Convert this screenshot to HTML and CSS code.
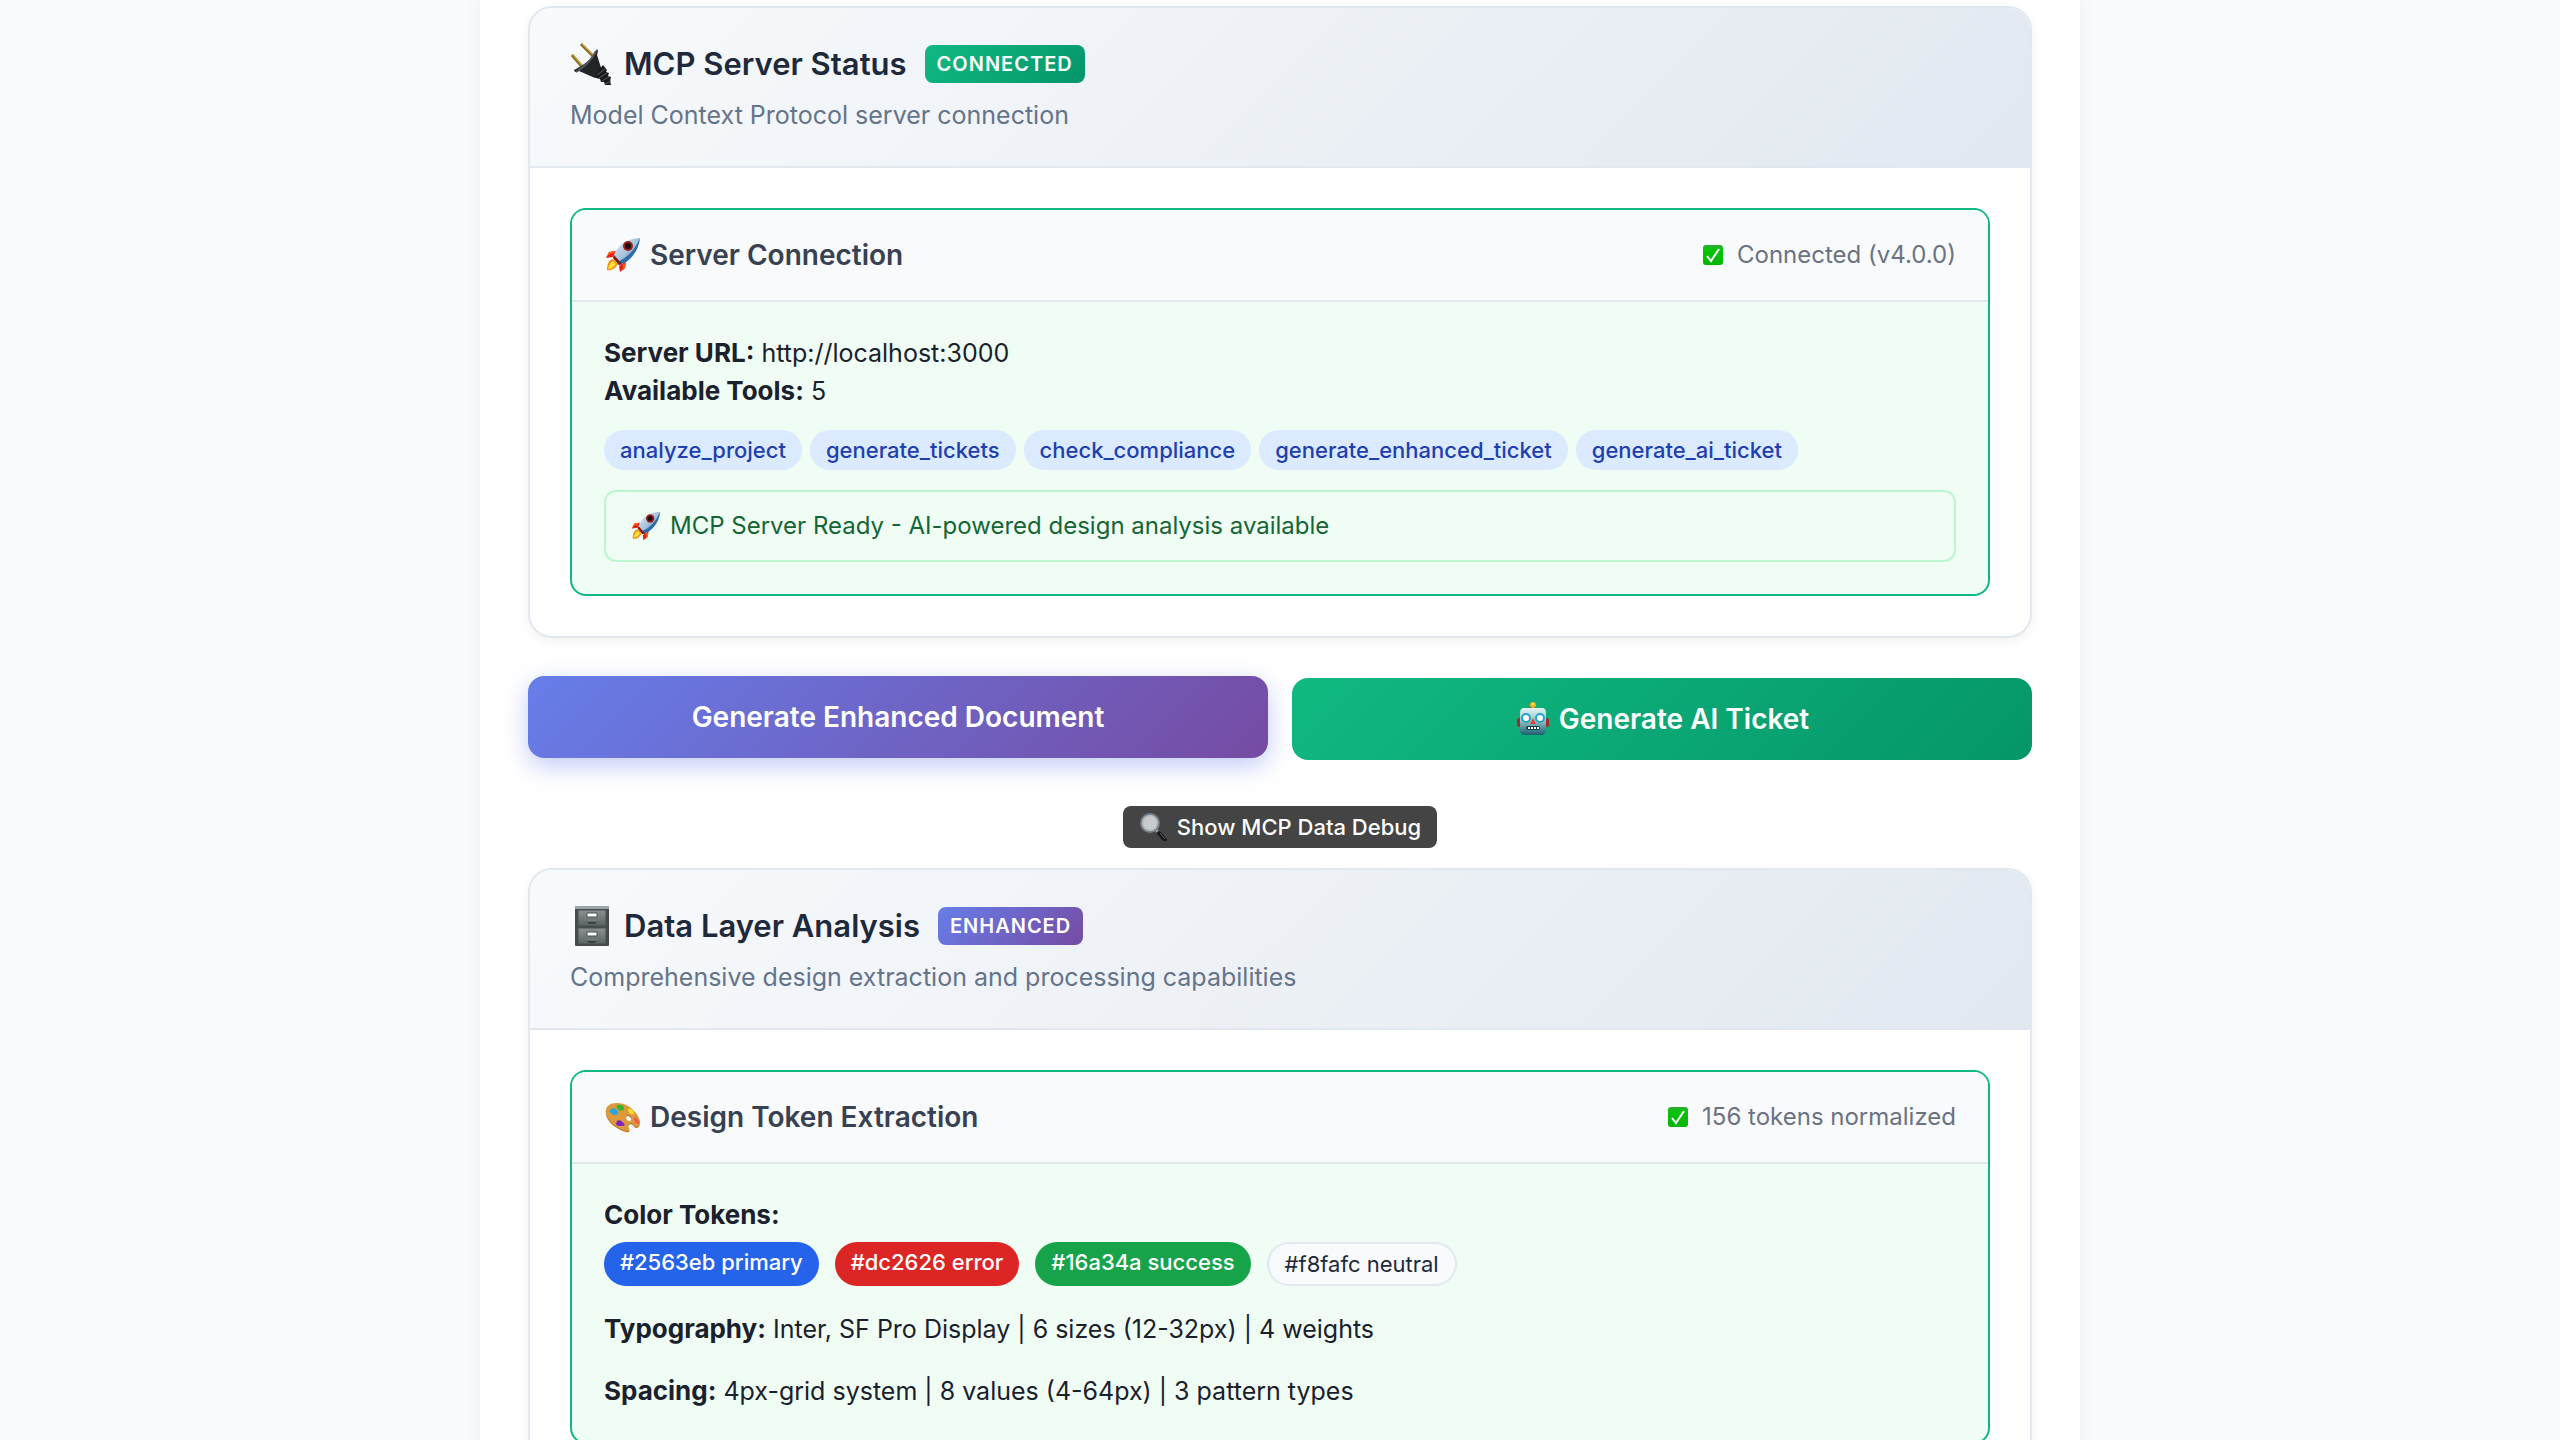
FILE: index.html
```html
<!DOCTYPE html>
<html lang="en">
<head>
<meta charset="utf-8">
<title>MCP Server Status</title>
<link rel="stylesheet" href="styles.css">
</head>
<body>
<svg class="defs" aria-hidden="true">
  <defs>
    <linearGradient id="rocketBody" x1="0" y1="0" x2="1" y2="1">
      <stop offset="0" stop-color="#e6eef5"/><stop offset=".5" stop-color="#a9c3dc"/><stop offset="1" stop-color="#2e6fae"/>
    </linearGradient>
    <linearGradient id="checkFill" x1="0" y1="0" x2="0" y2="1">
      <stop offset="0" stop-color="#2fa83c"/><stop offset=".2" stop-color="#0cc40c"/><stop offset="1" stop-color="#00b400"/>
    </linearGradient>
    <linearGradient id="robotFace" x1="0" y1="0" x2="0" y2="1">
      <stop offset="0" stop-color="#e4f4f4"/><stop offset=".45" stop-color="#9cc5cb"/><stop offset="1" stop-color="#17606e"/>
    </linearGradient>
    <linearGradient id="steel" x1="0" y1="0" x2="0" y2="1">
      <stop offset="0" stop-color="#8a9293"/><stop offset="1" stop-color="#5b6263"/>
    </linearGradient>
    <symbol id="rocket" viewBox="0 0 36 36">
      <path d="M11 14 4 15 1 21l7-1zM21 24l-1 7-5 4-1-6z" fill="#e8220c"/>
      <path d="M9 14l-5 1-1 3 6-2zM21 26l-1 5-2 2 0-6z" fill="#ff5a1e"/>
      <path d="M8 22c-4 1-6 5-6 11 4 1 8-1 11-6z" fill="#f58a0b"/>
      <path d="M8 24c-3 2-4 4-5 8 3 0 6-2 8-5z" fill="#ffe13d"/>
      <path d="M35 1C25 1 16 6 11 14L8 21l6 7 7-3c8-6 13-14 14-24z" fill="url(#rocketBody)"/>
      <path d="M35 1c-1 10-6 18-14 24l-7 3-2-3C22 21 30 13 35 1z" fill="#2d6ca8"/>
      <path d="M8 21l6 7 3-1-8-9z" fill="#7f1b12"/>
      <circle cx="23" cy="9" r="5" fill="#9b2018"/><circle cx="23" cy="9" r="3" fill="#1a1114"/>
    </symbol>
    <symbol id="check" viewBox="0 0 20 20">
      <rect width="20" height="20" rx="3" fill="url(#checkFill)"/>
      <path d="M4 11l4 5 8-12" fill="none" stroke="#fff" stroke-width="2"/>
    </symbol>
  </defs>
</svg>

<main class="page">
  <section class="card">
    <header class="card-header">
      <h2 class="card-title">
        <svg class="icon-title" viewBox="0 0 44 44" aria-hidden="true">
          <path d="M2 13l12 14M11 2l13 13" stroke="#8a6a1c" stroke-width="3"/>
          <path d="M2 12l12 14M11 1l13 13" stroke="#d9ad3d" stroke-width="1"/>
          <path d="M27 7l1 2-1 4 6 19-8 4-16-7-4 1-1-2C13 24 23 16 27 7z" fill="#232425"/>
          <path d="M26 9C22 18 14 25 6 30" fill="none" stroke="#55585a" stroke-width="2"/>
          <path d="M33 23l4 5-1 2 3 1-1 3 3 1-1 4 1 4h-6l-1-3-3 0-1-3-4-1-1-3z" fill="#191a1b"/>
          <path d="M27 33l8-6M29 36l8-5M32 39l7-4M35 42l6-3" stroke="#5a5d60" stroke-width="1"/>
        </svg>
        <span>MCP Server Status</span>
        <span class="badge badge-green">CONNECTED</span>
      </h2>
      <p class="card-subtitle">Model Context Protocol server connection</p>
    </header>
    <div class="card-body">
      <article class="component">
        <header class="component-header">
          <h3 class="component-title"><svg class="icon-component" aria-hidden="true"><use href="#rocket"/></svg>Server Connection</h3>
          <span class="status"><svg class="icon-check" aria-hidden="true"><use href="#check"/></svg>Connected (v4.0.0)</span>
        </header>
        <div class="component-body">
          <p class="line"><strong>Server URL:</strong> http://localhost:3000</p>
          <p class="line"><strong>Available Tools:</strong> 5</p>
          <ul class="tools">
            <li class="pill">analyze_project</li>
            <li class="pill">generate_tickets</li>
            <li class="pill">check_compliance</li>
            <li class="pill">generate_enhanced_ticket</li>
            <li class="pill">generate_ai_ticket</li>
          </ul>
          <p class="notice"><svg class="icon-notice" aria-hidden="true"><use href="#rocket"/></svg>MCP Server Ready - AI-powered design analysis available</p>
        </div>
      </article>
    </div>
  </section>

  <div class="actions">
    <button type="button" class="action action-document">Generate Enhanced Document</button>
    <button type="button" class="action action-ticket">
      <svg class="icon-action" viewBox="0 0 36 36" aria-hidden="true">
        <rect x="2" y="17" width="4" height="9" rx="2" fill="#9c2f2c"/><rect x="30" y="17" width="4" height="9" rx="2" fill="#9c2f2c"/>
        <path d="M14 8c0-3 8-3 8 0z" fill="#7a4569"/><circle cx="18" cy="4" r="3" fill="#f4b51c"/><circle cx="18" cy="3" r="1" fill="#fff0a0"/>
        <path d="M9 7h18q4 0 4 5v17q0 5-5 5H10q-5 0-5-5V12q0-5 4-5z" fill="url(#robotFace)"/>
        <circle cx="11" cy="17" r="4" fill="#fff" stroke="#20a5c8" stroke-width="2"/><circle cx="25" cy="17" r="4" fill="#fff" stroke="#20a5c8" stroke-width="2"/>
        <path d="M18 17l3 6h-6z" fill="#e2452f"/>
        <rect x="11" y="25" width="14" height="4" rx="2" fill="#143c46"/>
        <path d="M13 27h11" stroke="#fff" stroke-width="2" stroke-dasharray="2 1"/>
      </svg>
      Generate AI Ticket
    </button>
  </div>

  <button type="button" class="debug">
    <svg class="icon-debug" viewBox="0 0 28 28" aria-hidden="true">
      <path d="M17 17l3 3" stroke="#9aa0a4" stroke-width="3"/>
      <path d="M20 20l6 7" stroke="#15171a" stroke-width="4" stroke-linecap="round"/>
      <path d="M21 20l5 6" stroke="#5b6066" stroke-width="1"/>
      <circle cx="11" cy="10" r="9" fill="#c9cbcc" stroke="#75818b" stroke-width="2"/>
      <circle cx="11" cy="10" r="7" fill="none" stroke="#b4b8ba" stroke-width="1"/>
    </svg>
    Show MCP Data Debug
  </button>

  <section class="card">
    <header class="card-header">
      <h2 class="card-title">
        <svg class="icon-title" viewBox="0 0 44 44" aria-hidden="true">
          <rect x="5" y="2" width="34" height="40" rx="1" fill="#454b4c"/>
          <rect x="5" y="2" width="34" height="3" fill="#9aa5a7"/>
          <rect x="8" y="6" width="28" height="16" fill="url(#steel)" stroke="#4a5051"/>
          <rect x="8" y="24" width="28" height="16" fill="url(#steel)" stroke="#4a5051"/>
          <path d="M17 9h10v4H17zM17 28h10v4H17z" fill="#fff" stroke="#4a4f50"/>
          <path d="M17 17h10v1q-1 2-3 2h-4q-2 0-3-2zM17 36h10v1q-1 2-3 2h-4q-2 0-3-2z" fill="#3a4041"/>
          <path d="M17 17h10M17 36h10" stroke="#8a9091"/>
        </svg>
        <span>Data Layer Analysis</span>
        <span class="badge badge-purple">ENHANCED</span>
      </h2>
      <p class="card-subtitle">Comprehensive design extraction and processing capabilities</p>
    </header>
    <div class="card-body">
      <article class="component">
        <header class="component-header">
          <h3 class="component-title">
            <svg class="icon-component" viewBox="0 0 36 36" aria-hidden="true">
              <path d="M12 5C5 5 0 8 1 15c1 8 10 15 20 18 3 1 4-1 3-3-2-3 0-6 4-4 1 2 2 3 4 3 5-2 3-10-2-15C25 8 19 5 12 5zm13 13c2 2 2 4 0 5s-4-2-4-4 2-3 4-1z" fill="#a86a1c"/>
              <path d="M12 4C5 4 0 7 1 14c1 8 10 15 20 18 3 1 4-1 3-3-2-3 0-6 4-4 1 2 2 3 4 3 5-2 3-10-2-15C25 7 19 4 12 4zm13 13c2 2 2 4 0 5s-4-2-4-4 2-3 4-1z" fill="#dd9a3c"/>
              <path d="M6 10c3-2 6 0 7 3s-3 4-6 2-3-3-1-5z" fill="#28a4e2"/>
              <path d="M13 6c3-1 7 1 6 4s-6 2-7-1 0-2 1-3z" fill="#30b62c"/>
              <path d="M23 10c3-1 6 2 6 5-3 1-6-1-6-5z" fill="#f7df2c"/>
              <path d="M12 22c2-2 5 0 8 4-3 2-9 1-9-1z" fill="#7d1fc4"/>
              <path d="M29 19c2-1 5 2 5 5-2 2-5-1-5-5z" fill="#f2584a"/>
            </svg>Design Token Extraction</h3>
          <span class="status"><svg class="icon-check" aria-hidden="true"><use href="#check"/></svg>156 tokens normalized</span>
        </header>
        <div class="component-body">
          <p class="line"><strong>Color Tokens:</strong></p>
          <ul class="tokens">
            <li class="token token-primary">#2563eb primary</li>
            <li class="token token-error">#dc2626 error</li>
            <li class="token token-success">#16a34a success</li>
            <li class="token token-neutral">#f8fafc neutral</li>
          </ul>
          <p class="line line-spaced"><strong>Typography:</strong> Inter, SF Pro Display | 6 sizes (12-32px) | 4 weights</p>
          <p class="line line-spaced"><strong>Spacing:</strong> 4px-grid system | 8 values (4-64px) | 3 pattern types</p>
        </div>
      </article>
    </div>
  </section>
</main>
</body>
</html>
```
FILE: styles.css
```css
* { box-sizing: border-box; margin: 0; padding: 0; }

body {
  height: 100vh;
  overflow: hidden;
  background: #f8fafc;
  color: #1a202c;
  font-family: Inter, "Liberation Sans", sans-serif;
  font-size: 26px;
  font-weight: 400;
  line-height: 38px;
}

ul { list-style: none; }
button { border: 0; font-family: inherit; cursor: pointer; }
svg { flex: none; }
.defs { display: block; width: 0; height: 0; }

.page {
  display: flex;
  flex-direction: column;
  max-width: 1600px;
  margin: 0 auto;
  padding: 6px 48px 48px;
  background: #fff;
  box-shadow: 0 0 20px rgba(0, 0, 0, 0.05);
}

/* Cards */
.card {
  border: 2px solid #e2e8f0;
  border-radius: 24px;
  background: #fff;
  box-shadow: 0 4px 12px rgba(0, 0, 0, 0.05);
  overflow: hidden;
}

.card-header {
  padding: 32px 40px;
  border-bottom: 2px solid #e2e8f0;
  background: linear-gradient(135deg, #f8fafc, #e2e8f0);
}

.card-title {
  display: flex;
  align-items: center;
  gap: 10px;
  color: #1e293b;
  font-size: 31px;
  font-weight: 600;
  line-height: 48px;
}

.icon-title { width: 44px; height: 44px; }

.badge {
  margin-left: 8px;
  padding: 0 12px;
  border-radius: 8px;
  color: #fff;
  font-size: 20px;
  letter-spacing: 1px;
  line-height: 38px;
}

.badge-green { background: linear-gradient(135deg, #10b981, #059669); }
.badge-purple { background: linear-gradient(135deg, #667eea, #764ba2); }

.card-subtitle { margin-top: 8px; color: #64748b; font-size: 25px; }
.card-body { padding: 40px; }

/* Components inside a card */
.component {
  border: 2px solid #10b981;
  border-radius: 16px;
  background: #f0fdf4;
  overflow: hidden;
}

.component-header {
  display: flex;
  align-items: center;
  justify-content: space-between;
  padding: 24px 32px;
  border-bottom: 2px solid #e2e8f0;
  background: #f8fafc;
}

.component-title {
  display: flex;
  align-items: center;
  gap: 8px;
  color: #374151;
  font-size: 28px;
  font-weight: 600;
  line-height: 42px;
}

.icon-component { width: 38px; height: 36px; }

.status {
  display: flex;
  align-items: center;
  gap: 14px;
  color: #6b7280;
  font-size: 24px;
}

.icon-check { width: 20px; height: 20px; }

.component-body { padding: 32px; }
.line { font-size: 25px; }
.line strong { font-size: 26px; font-weight: 700; }
.line-spaced { margin-top: 24px; }

.tools { display: flex; flex-wrap: wrap; gap: 8px; margin: 20px 0; }

.pill {
  padding: 0 16px;
  border-radius: 20px;
  background: #dbeafe;
  color: #1e40af;
  font-size: 22px;
  font-weight: 500;
  line-height: 40px;
}

.notice {
  display: flex;
  align-items: center;
  gap: 8px;
  padding: 16px 24px;
  border: 2px solid #bbf7d0;
  border-radius: 12px;
  color: #166534;
  font-size: 24px;
  line-height: 36px;
}

.icon-notice { width: 32px; height: 30px; }

.tokens { display: flex; flex-wrap: wrap; gap: 16px; margin-top: 8px; }

.token {
  padding: 0 16px;
  border-radius: 24px;
  color: #fff;
  font-size: 22px;
  font-weight: 500;
  line-height: 40px;
}

.token-primary { background: #2563eb; }
.token-error { background: #dc2626; }
.token-success { background: #16a34a; }
.token-neutral { border: 2px solid #e2e8f0; background: #f8fafc; color: #1e293b; font-weight: 400; }

/* Actions */
.actions {
  display: grid;
  grid-template-columns: 1fr 1fr;
  gap: 24px;
  margin-top: 40px;
}

.action {
  display: flex;
  align-items: center;
  justify-content: center;
  gap: 8px;
  padding: 20px 32px;
  border-radius: 16px;
  color: #fff;
  font-size: 28px;
  font-weight: 600;
  line-height: 42px;
}

.action-document {
  background: linear-gradient(135deg, #667eea, #764ba2);
  box-shadow: 0 8px 24px rgba(102, 126, 234, 0.4);
  transform: translateY(-2px);
}

.action-ticket { background: linear-gradient(135deg, #10b981, #059669); }
.icon-action { width: 36px; height: 36px; }

.debug {
  display: flex;
  align-items: center;
  align-self: center;
  gap: 10px;
  margin: 46px 0 20px;
  padding: 0 16px;
  border-radius: 8px;
  background: #444;
  color: #fff;
  font-size: 22px;
  font-weight: 500;
  line-height: 42px;
}

.icon-debug { width: 28px; height: 28px; }
```
